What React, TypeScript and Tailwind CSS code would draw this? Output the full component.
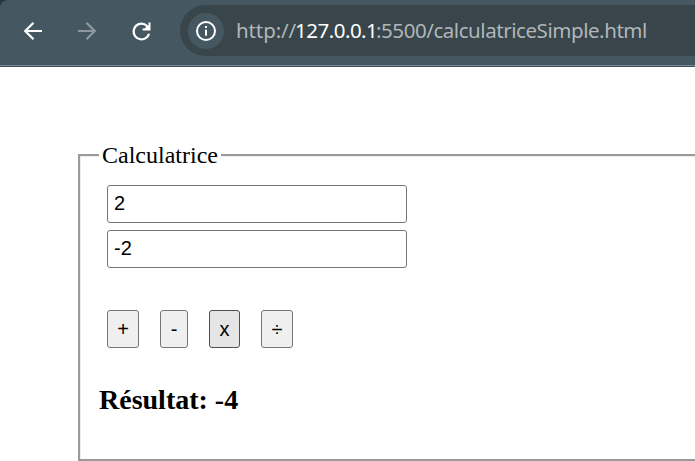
import React from "react";

const operations = [
  { sign: "+", style: "w-8 border-[#767676] bg-[#efefef]" },
  { sign: "-", style: "w-7 border-[#767676] bg-[#efefef]" },
  { sign: "x", style: "w-[31px] border-[#4f4f4f] bg-[#e5e5e5]" },
  { sign: "÷", style: "w-8 border-[#767676] bg-[#efefef]" },
];

function Toolbar() {
  return (
    <div className="h-[67px] bg-[#27373d]">
      <header className="flex h-[67px] rounded-tl-[8px] bg-[#455760] pt-[5px]">
        <div className="flex h-full w-full flex-col">
          <div className="flex h-[51px] items-center">
            <nav className="flex w-[180px] shrink-0 items-center">
              <svg className="ml-[21px] mt-px size-6 text-white" viewBox="0 0 24 24" fill="none" stroke="currentColor" strokeWidth="2.2">
                <path d="M21 12H4.5M12.5 3.7 4.2 12l8.3 8.3" />
              </svg>
              <svg className="ml-[30px] mt-px size-6 text-[#8d999e]" viewBox="0 0 24 24" fill="none" stroke="currentColor" strokeWidth="2.2">
                <path d="M3 12h16.5M11.5 3.7l8.3 8.3-8.3 8.3" />
              </svg>
              <svg className="ml-[28.5px] mt-px size-[27px] shrink-0 text-white" viewBox="0 0 24 24" fill="currentColor">
                <path d="M17.65 6.35A7.96 7.96 0 0 0 12 4a8 8 0 1 0 7.73 10h-2.08A6 6 0 1 1 12 6c1.66 0 3.14.69 4.22 1.78L14.7 9.3H13V11h7V4h-1.8v2.9z" />
              </svg>
            </nav>
            <div className="flex h-[51px] flex-1 items-center rounded-l-full bg-[#38454b] pl-2">
              <div className="flex size-9 shrink-0 items-center justify-center rounded-full bg-[#455760]">
                <svg className="mt-px size-[22px] text-white" viewBox="0 0 22 22" fill="none" stroke="currentColor" strokeWidth="2">
                  <circle cx="11" cy="11" r="9" />
                  <path d="M11 9.7v6M11 6v2.1" />
                </svg>
              </div>
              <div className="mb-0.5 ml-3 flex whitespace-pre font-['Noto_Sans',sans-serif] text-[20.5px] leading-7 text-[#b0b6b9]">
                <span className="w-[59px] tracking-[-0.1px]">http://</span>
                <span className="w-[81px] tracking-[-0.5px] text-white">127.0.0.1</span>
                <span className="tracking-[-0.44px]">:5500/calculatriceSimple.html</span>
              </div>
            </div>
          </div>
          <div className="mt-[9px] h-px bg-[#7b8b92]" />
          <div className="h-px bg-[#40515a]" />
        </div>
      </header>
    </div>
  );
}

export default function App() {
  return (
    <div className="h-[461px] w-[695px] overflow-hidden bg-white text-black">
      <Toolbar />
      <main className="ml-[78px] pt-[75px]">
        <fieldset className="h-[319px] w-[700px] border-2 border-[#9a9a9a] pl-[19px] shadow-[inset_1px_1px_#ececec]">
          <legend className="h-[26px] bg-white px-[3px] font-['Liberation_Serif',serif] text-[24px] leading-[27px]">Calculatrice</legend>
          <div className="ml-2 mt-[17px] flex flex-col gap-[7px] font-['Liberation_Sans',sans-serif] text-[20px]">
            <input aria-label="a" defaultValue="2" className="h-[38px] w-[300px] rounded-[3px] border border-[#767676] px-1.5 pb-0.5" />
            <input aria-label="b" defaultValue="-2" className="h-[38px] w-[300px] rounded-[3px] border border-[#767676] px-1.5 pb-0.5" />
          </div>
          <div className="ml-2 mt-[42px] flex gap-[21px] font-['Liberation_Sans',sans-serif] text-[20px]">
            {operations.map(({ sign, style }) => (
              <button key={sign} className={`h-[38px] rounded-[3px] border ${style}`}>{sign}</button>
            ))}
          </div>
          <h2 className="mt-9 font-['Liberation_Serif',serif] text-[28px] font-bold leading-8">Résultat: -4</h2>
        </fieldset>
      </main>
    </div>
  );
}
